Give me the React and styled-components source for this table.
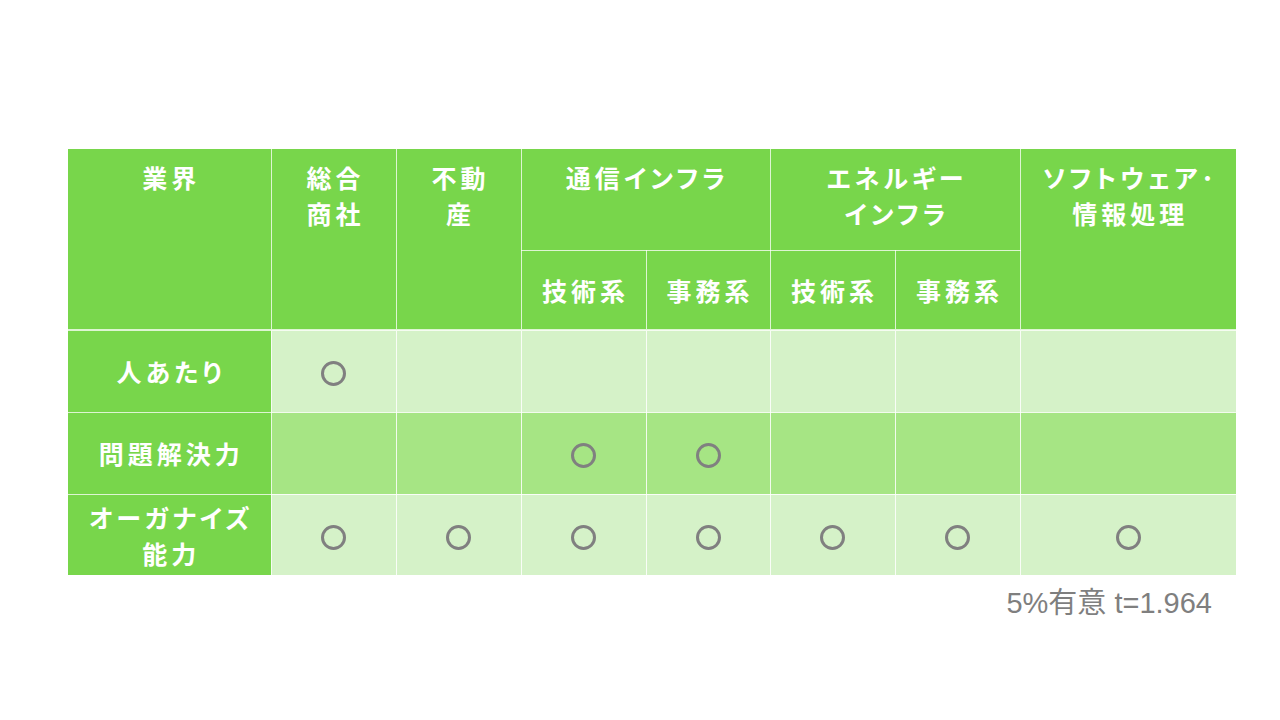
import React from 'react';
import styled, { createGlobalStyle } from 'styled-components';

const GlobalStyle = createGlobalStyle`
    html, body {
        margin: 0;
        padding: 0;
        background: #ffffff;
    }
    body {
        font-family: "Noto Sans CJK JP", "Liberation Sans", sans-serif;
    }
`;

const DARK = '#78d64b';
const LIGHT = '#d5f2c8';
const MID = '#a6e584';

const columns = [203, 125, 125, 125, 124, 125, 125, 216];

const rows = [
    { label: '人あたり', tone: 'light', marks: [1, 0, 0, 0, 0, 0, 0] },
    { label: '問題解決力', tone: 'mid', marks: [0, 0, 1, 1, 0, 0, 0] },
    { label: ['オーガナイズ', '能力'], tone: 'light', marks: [1, 1, 1, 1, 1, 1, 1] },
];

const Page = styled.div`
    width: 1280px;
    height: 720px;
    padding: 149px 0 0 68px;
    box-sizing: border-box;
`;

const Table = styled.table`
    width: 1168px;
    border-collapse: collapse;
    border-style: hidden;
    table-layout: fixed;
    color: #ffffff;
    font-weight: 700;
    font-size: 25px;
    letter-spacing: 4px;
    font-feature-settings: "palt";
`;

const HeadRow = styled.tr`
    height: ${p => p.$h}px;
`;

const Head = styled.th`
    background: ${DARK};
    border: 1px solid rgba(255, 255, 255, 0.75);
    border-bottom-width: ${p => (p.$last ? 2 : 1)}px;
    vertical-align: ${p => (p.$center ? 'middle' : 'top')};
    padding: ${p => (p.$center ? '0 0 0 4px' : '10px 0 0 4px')};
    line-height: 36px;
    font-weight: 700;
    text-align: center;
`;

const BodyRow = styled.tr`
    height: ${p => p.$h}px;
`;

const Label = styled.th`
    background: ${DARK};
    border: 1px solid rgba(255, 255, 255, 0.75);
    padding: 0 0 0 4px;
    line-height: 36px;
    font-weight: 700;
    text-align: center;
    vertical-align: middle;
`;

const Cell = styled.td`
    background: ${p => (p.$tone === 'mid' ? MID : LIGHT)};
    border: 1px solid rgba(255, 255, 255, 0.85);
    text-align: center;
    vertical-align: middle;
    padding: 0 0 3px;
`;

const Mark = styled.span`
    display: inline-block;
    width: 25px;
    height: 25px;
    box-sizing: border-box;
    border: 3px solid #808080;
    border-radius: 50%;
    vertical-align: middle;
`;

const Note = styled.div`
    width: 1168px;
    margin-top: 12px;
    padding-right: 24px;
    box-sizing: border-box;
    text-align: right;
    font-family: "Liberation Sans", "Noto Sans CJK JP", sans-serif;
    font-size: 29px;
    line-height: 32px;
    color: #7f7f7f;
`;

const App = () => (
    <Page>
        <GlobalStyle />
        <Table>
            <colgroup>
                {columns.map((w, i) => <col key={i} style={{ width: w }} />)}
            </colgroup>
            <thead>
                <HeadRow $h={101}>
                    <Head rowSpan={2} $last>業界</Head>
                    <Head rowSpan={2} $last>総合<br />商社</Head>
                    <Head rowSpan={2} $last>不動<br />産</Head>
                    <Head colSpan={2}>通信インフラ</Head>
                    <Head colSpan={2}>エネルギー<br />インフラ</Head>
                    <Head rowSpan={2} $last>ソフトウェア･<br />情報処理</Head>
                </HeadRow>
                <HeadRow $h={80}>
                    <Head $center $last>技術系</Head>
                    <Head $center $last>事務系</Head>
                    <Head $center $last>技術系</Head>
                    <Head $center $last>事務系</Head>
                </HeadRow>
            </thead>
            <tbody>
                {rows.map((row, i) => (
                    <BodyRow key={i} $h={i === 2 ? 81 : 82}>
                        <Label>
                            {Array.isArray(row.label)
                                ? <>{row.label[0]}<br />{row.label[1]}</>
                                : row.label}
                        </Label>
                        {row.marks.map((m, j) => (
                            <Cell key={j} $tone={row.tone}>{m ? <Mark /> : null}</Cell>
                        ))}
                    </BodyRow>
                ))}
            </tbody>
        </Table>
        <Note>5%有意 t=1.964</Note>
    </Page>
);

export default App;
